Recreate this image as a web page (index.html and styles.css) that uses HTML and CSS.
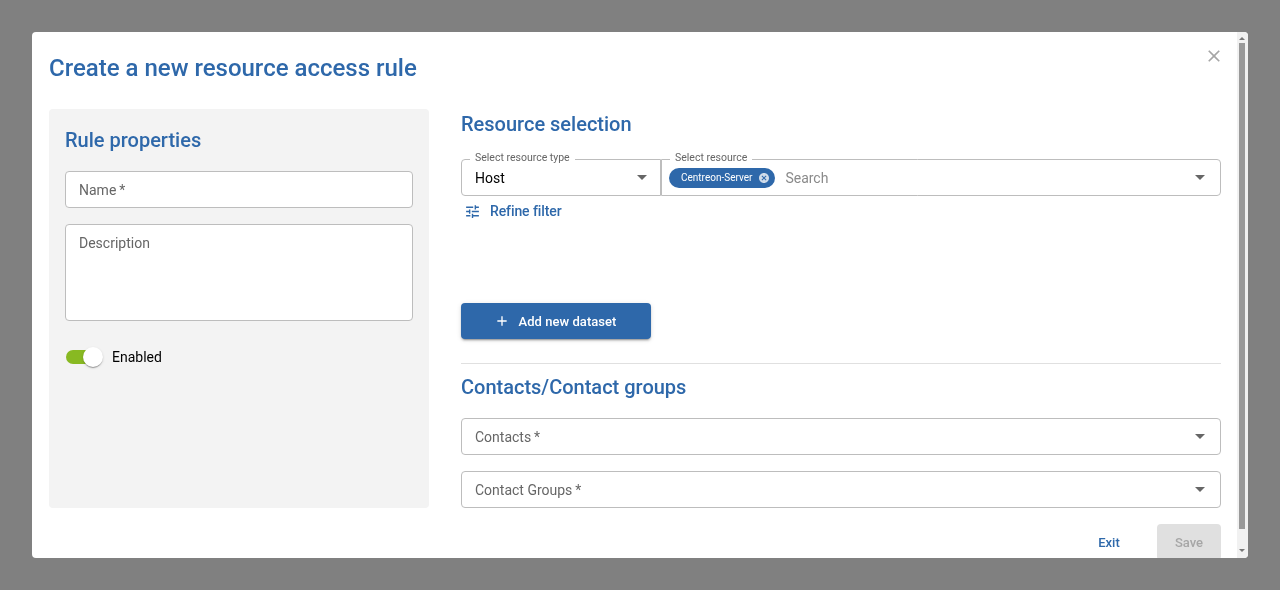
FILE: index.html
```html
<!DOCTYPE html>
<html lang="en">
  <head>
    <meta charset="UTF-8">
    <title>Create a new resource access rule</title>
    <link rel="stylesheet" href="styles.css">
  </head>
  <body>
    <div class="modal">
      <div class="modal-content">
        <header class="modal-header">
          <h1>Create a new resource access rule</h1>
          <svg class="close-icon" viewBox="0 0 24 24"><path d="M19 6.41 17.59 5 12 10.59 6.41 5 5 6.41 10.59 12 5 17.59 6.41 19 12 13.41 17.59 19 19 17.59 13.41 12z"/></svg>
        </header>
        <div class="modal-columns">
          <section class="properties">
            <h2>Rule properties</h2>
            <div class="field field--name">Name&thinsp;*</div>
            <div class="field field--description">Description</div>
            <div class="toggle-row">
              <span class="toggle"><span class="toggle-track"></span><span class="toggle-thumb"></span></span>
              <span>Enabled</span>
            </div>
          </section>
          <section class="selection">
            <h2>Resource selection</h2>
            <div class="dataset">
              <div class="select select--type">
                <span class="select-label">Select resource type</span>
                <span class="select-value">Host</span>
                <span class="caret"></span>
              </div>
              <div class="select select--resource">
                <span class="select-label">Select resource</span>
                <span class="chip">Centreon-Server
                  <svg class="chip-remove" viewBox="0 0 24 24"><path d="M12 2C6.47 2 2 6.47 2 12s4.47 10 10 10 10-4.47 10-10S17.53 2 12 2zm5 13.59L15.59 17 12 13.41 8.41 17 7 15.59 10.59 12 7 8.41 8.41 7 12 10.59 15.59 7 17 8.41 13.41 12 17 15.59z"/></svg>
                </span>
                <span class="select-placeholder">Search</span>
                <span class="caret"></span>
              </div>
            </div>
            <div class="refine">
              <svg class="refine-icon" viewBox="0 0 24 24"><path d="M3 17v2h6v-2H3zM3 5v2h10V5H3zm10 16v-2h8v-2h-8v-2h-2v6h2zM7 9v2H3v2h4v2h2V9H7zm14 4v-2H11v2h10zm-6-4h2V7h4V5h-4V3h-2v6z"/></svg>
              <span>Refine filter</span>
            </div>
            <button class="add-button">
              <svg class="add-icon" viewBox="0 0 24 24"><path d="M19 13h-6v6h-2v-6H5v-2h6V5h2v6h6v2z"/></svg>
              Add new dataset
            </button>
            <hr class="divider">
            <h2 class="contacts-title">Contacts/Contact groups</h2>
            <div class="field field--select">Contacts&thinsp;*<span class="caret"></span></div>
            <div class="field field--select">Contact Groups&thinsp;*<span class="caret"></span></div>
          </section>
        </div>
        <footer class="modal-actions">
          <button class="exit-button">Exit</button>
          <button class="save-button">Save</button>
        </footer>
      </div>
      <div class="scrollbar">
        <span class="scroll-arrow scroll-arrow--up"></span>
        <span class="scroll-thumb"></span>
        <span class="scroll-arrow scroll-arrow--down"></span>
      </div>
    </div>
  </body>
</html>
```

FILE: styles.css
```css
:root {
  font-family: Roboto, "Liberation Sans", Arial, sans-serif;
  color: #000;
}

html,
body {
  height: 100%;
}

body {
  margin: 0;
  padding: 32px;
  box-sizing: border-box;
  background: #808080;
  overflow: hidden;
}

.modal {
  display: flex;
  height: 526px;
  background: #fff;
  border-radius: 4px;
  overflow: hidden;
  will-change: transform;
}

.modal-content {
  flex: 1;
  min-width: 0;
  padding: 0 16px 0 17px;
}

.modal-header {
  display: flex;
  justify-content: space-between;
  height: 77px;
}

.modal-header h1 {
  margin: 22px 0 0;
  font-size: 24px;
  line-height: 28px;
  font-weight: 500;
  color: #2e68aa;
}

.close-icon {
  width: 20px;
  height: 20px;
  margin: 14px -3px 0 0;
  fill: #a6a6a6;
}

.modal-columns {
  display: flex;
  gap: 32px;
}

.properties {
  box-sizing: border-box;
  width: 380px;
  height: 399px;
  padding: 20px 16px;
  background: #f3f3f3;
  border-radius: 4px;
}

.properties h2,
.selection h2 {
  margin: 0;
  font-size: 20px;
  line-height: 23px;
  font-weight: 500;
  color: #2e68aa;
}

.field {
  box-sizing: border-box;
  display: flex;
  align-items: center;
  height: 37px;
  padding: 0 13px;
  background: #fff;
  border: 1px solid #bdbdbd;
  border-radius: 4px;
  font-size: 14px;
  color: #666;
}

.field--name {
  margin-top: 19px;
}

.field--description {
  align-items: flex-start;
  height: 97px;
  margin-top: 16px;
  padding-top: 10px;
}

.toggle-row {
  display: flex;
  align-items: center;
  gap: 9px;
  margin-top: 24px;
  font-size: 14px;
}

.toggle {
  position: relative;
  display: block;
  width: 38px;
  height: 24px;
}

.toggle-track {
  position: absolute;
  top: 5px;
  left: 1px;
  width: 34px;
  height: 14px;
  background: #88b922;
  border-radius: 7px;
}

.toggle-thumb {
  position: absolute;
  top: 2px;
  left: 18px;
  width: 20px;
  height: 20px;
  background: #fff;
  border-radius: 50%;
  box-shadow: 0 2px 1px -1px rgba(0, 0, 0, .2), 0 1px 1px rgba(0, 0, 0, .14), 0 1px 3px rgba(0, 0, 0, .12);
}

.selection {
  flex: 1;
  min-width: 0;
}

.selection > h2 {
  margin-top: 4px;
}

.dataset {
  display: flex;
  margin-top: 23px;
}

.select {
  position: relative;
  box-sizing: border-box;
  display: flex;
  align-items: center;
  height: 37px;
  border: 1px solid #bdbdbd;
  font-size: 14px;
}

.select--type {
  width: 200px;
  padding: 0 13px;
  border-radius: 4px 0 0 4px;
}

.select--resource {
  flex: 1;
  padding: 0 15px 0 7px;
  border-radius: 0 4px 4px 0;
}

.select-label {
  position: absolute;
  top: -8px;
  left: 8px;
  padding: 0 5px;
  background: #fff;
  font-size: 10.5px;
  line-height: 12px;
  color: #666;
}

.select-value {
  flex: 1;
}

.select-placeholder {
  flex: 1;
  margin-left: 10px;
  color: #8a8a8a;
}

.caret {
  width: 0;
  height: 0;
  margin-left: auto;
  border-left: 5px solid transparent;
  border-right: 5px solid transparent;
  border-top: 5px solid #666;
}

.chip {
  display: flex;
  align-items: center;
  height: 20px;
  padding: 0 5px 0 12px;
  background: #2e68aa;
  border-radius: 10px;
  font-size: 10px;
  color: #fff;
}

.chip-remove {
  width: 12px;
  height: 12px;
  margin-left: 6px;
  fill: #d0dcea;
}

.refine {
  display: flex;
  align-items: center;
  gap: 9px;
  height: 30px;
  padding-left: 3px;
  font-size: 14px;
  letter-spacing: -.1px;
  font-weight: 500;
  color: #2e68aa;
}

.refine-icon {
  width: 17px;
  height: 17px;
  fill: #2e68aa;
}

.add-button {
  display: flex;
  align-items: center;
  justify-content: center;
  gap: 9px;
  width: 190px;
  height: 36px;
  margin-top: 77px;
  padding: 0 8px 0 6px;
  background: #2e68aa;
  border: 0;
  border-radius: 4px;
  box-shadow: 0 3px 1px -2px rgba(0, 0, 0, .2), 0 2px 2px rgba(0, 0, 0, .14), 0 1px 5px rgba(0, 0, 0, .12);
  font: 500 13px Roboto, sans-serif;
  letter-spacing: .05px;
  color: #fff;
}

.add-icon {
  width: 16px;
  height: 16px;
  fill: #fff;
}

.divider {
  margin: 24px 0 0;
  border: 0;
  border-top: 1px solid #e0e0e0;
}

.selection > .contacts-title {
  margin-top: 12px;
}

.field--select {
  height: 37px;
  margin-top: 16px;
  padding-right: 15px;
}

.contacts-title + .field--select {
  margin-top: 19px;
}

.modal-actions {
  display: flex;
  justify-content: flex-end;
  align-items: flex-start;
  gap: 17px;
  margin-top: 16px;
}

.exit-button,
.save-button {
  height: 36px;
  border: 0;
  border-radius: 4px;
  font: 500 13px Roboto, sans-serif;
}

.exit-button {
  width: 64px;
  padding-left: 8px;
  background: none;
  color: #2e68aa;
}

.save-button {
  width: 64px;
  background: #e0e0e0;
  color: #a6a6a6;
}

.scrollbar {
  display: flex;
  flex-direction: column;
  align-items: center;
  box-sizing: border-box;
  width: 11px;
  padding: 5px 3px 6px 2px;
  background: #f1f1f1;
}

.scroll-thumb {
  flex: 1;
  width: 6px;
  margin: 3px 0 20px;
  background: #999;
}

.scroll-arrow {
  width: 0;
  height: 0;
  border-left: 3px solid transparent;
  border-right: 3px solid transparent;
}

.scroll-arrow--up {
  border-bottom: 3px solid #777;
}

.scroll-arrow--down {
  border-top: 3px solid #777;
}
```
